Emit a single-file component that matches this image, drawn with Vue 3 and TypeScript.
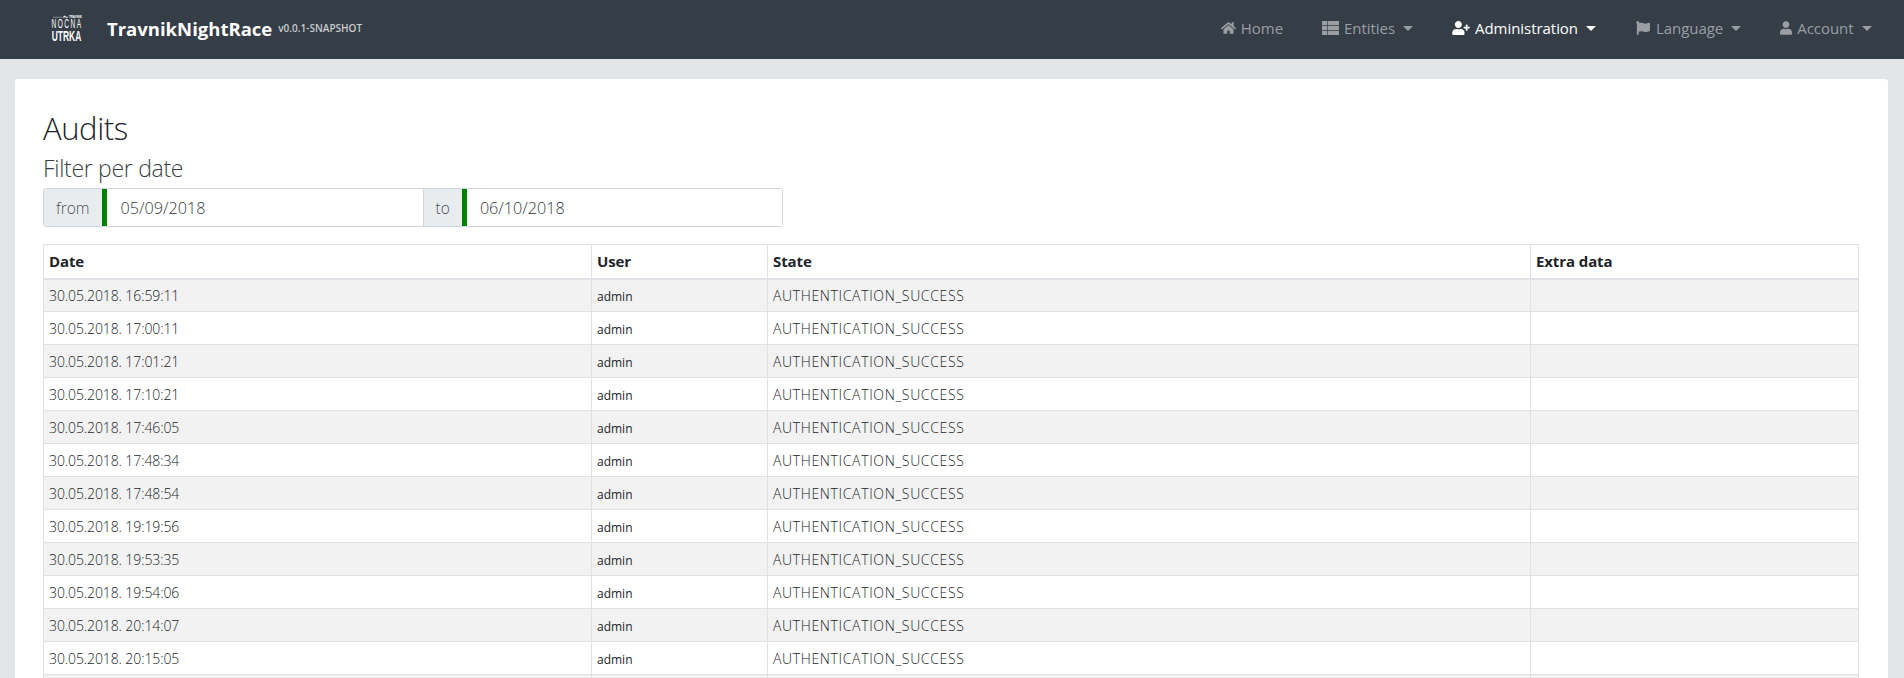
<script setup lang="ts">
interface NavItem { label: string; vb: string; d: string; w: number; caret: boolean; active?: boolean }
const navItems: NavItem[] = [
  { label: 'Home', vb: '0 0 576 512', w: 15, caret: false, d: 'M280.37 148.26L96 300.11V464a16 16 0 0 0 16 16l112.06-.29a16 16 0 0 0 15.92-16V368a16 16 0 0 1 16-16h64a16 16 0 0 1 16 16v95.64a16 16 0 0 0 16 16.05L464 480a16 16 0 0 0 16-16V300L295.67 148.26a12.19 12.19 0 0 0-15.3 0zM571.6 251.47L488 182.56V44.05a12 12 0 0 0-12-12h-56a12 12 0 0 0-12 12v72.61L318.47 43a48 48 0 0 0-61 0L4.34 251.47a12 12 0 0 0-1.6 16.9l25.5 31A12 12 0 0 0 45.15 301l235.22-193.74a12.19 12.19 0 0 1 15.3 0L530.9 301a12 12 0 0 0 16.9-1.6l25.5-31a12 12 0 0 0-1.7-16.93z' },
  { label: 'Entities', vb: '0 0 512 420', w: 17, caret: true, d: 'M0 0h152v124H0zM172 0h340v124H172zM0 148h152v124H0zM172 148h340v124H172zM0 296h152v124H0zM172 296h340v124H172z' },
  { label: 'Administration', vb: '0 0 640 512', w: 18, caret: true, active: true, d: 'M624 208h-64v-64c0-8.8-7.2-16-16-16h-32c-8.8 0-16 7.2-16 16v64h-64c-8.8 0-16 7.2-16 16v32c0 8.8 7.2 16 16 16h64v64c0 8.8 7.2 16 16 16h32c8.8 0 16-7.2 16-16v-64h64c8.8 0 16-7.2 16-16v-32c0-8.8-7.2-16-16-16zm-400 48c70.7 0 128-57.3 128-128S294.7 0 224 0 96 57.3 96 128s57.3 128 128 128zm89.6 32h-16.7c-22.2 10.2-46.9 16-72.9 16s-50.6-5.8-72.9-16h-16.7C60.2 288 0 348.2 0 422.4V464c0 26.5 21.5 48 48 48h352c26.5 0 48-21.5 48-48v-41.6c0-74.2-60.2-134.4-134.4-134.4z' },
  { label: 'Language', vb: '0 0 512 512', w: 16, caret: true, d: 'M349.565 98.783C295.978 98.783 251.721 64 184.348 64c-24.955 0-47.309 4.384-68.045 12.013a55.947 55.947 0 0 0 3.586-23.562C118.117 24.015 94.806 1.206 66.338.048 34.345-1.254 8 24.296 8 56c0 19.026 9.497 35.825 24 45.945V488c0 13.255 10.745 24 24 24h16c13.255 0 24-10.745 24-24v-94.4c28.311-12.064 63.582-22.122 114.435-22.122 53.588 0 97.844 34.783 165.217 34.783 48.169 0 86.667-16.294 122.505-40.858C506.84 359.452 512 349.571 512 339.045v-243.1c0-23.393-24.269-38.87-45.485-29.016-34.338 15.948-76.454 31.854-116.95 31.854z' },
  { label: 'Account', vb: '0 0 448 512', w: 12, caret: true, d: 'M224 256c70.7 0 128-57.3 128-128S294.7 0 224 0 96 57.3 96 128s57.3 128 128 128zm89.6 32h-16.7c-22.2 10.2-46.9 16-72.9 16s-50.6-5.8-72.9-16h-16.7C60.2 288 0 348.2 0 422.4V464c0 26.5 21.5 48 48 48h352c26.5 0 48-21.5 48-48v-41.6c0-74.2-60.2-134.4-134.4-134.4z' },
]
const times = ['16:59:11','17:00:11','17:01:21','17:10:21','17:46:05','17:48:34','17:48:54','19:19:56','19:53:35','19:54:06','20:14:07','20:15:05']
const rows = times.map(t => ({ date: `30.05.2018. ${t}`, user: 'admin', state: 'AUTHENTICATION_SUCCESS' }))
</script>

<template>
  <div class="page">
    <header class="navbar">
      <div class="logo">
        <svg class="logo-mark" viewBox="0 0 20 4" aria-hidden="true"><path d="M0 3h12M13 3l3-2 1 2z" stroke="#fff" stroke-width=".5" fill="#fff"/></svg>
        <span class="logo-top">TRAVNIK</span>
        <span class="logo-a">NOČNA</span>
        <span class="logo-b">UTRKA</span>
      </div>
      <span class="brand">TravnikNightRace</span>
      <span class="version">v0.0.1-SNAPSHOT</span>
      <nav class="nav">
        <a v-for="item in navItems" :key="item.label" class="nav-link" :class="{ active: item.active }">
          <svg class="nav-icon" :viewBox="item.vb" :width="item.w" height="14" fill="currentColor" aria-hidden="true"><path :d="item.d" /></svg>
          <span>{{ item.label }}</span>
          <i v-if="item.caret" class="caret"></i>
        </a>
      </nav>
    </header>
    <main class="content">
      <section class="card">
        <h2 class="title">Audits</h2>
        <h4 class="subtitle">Filter per date</h4>
        <div class="range">
          <span class="addon addon-from">from</span>
          <input class="date" readonly value="05/09/2018" />
          <span class="addon">to</span>
          <input class="date" readonly value="06/10/2018" />
        </div>
        <table class="audit">
          <colgroup>
            <col class="c-date" /><col class="c-user" /><col class="c-state" /><col class="c-extra" />
          </colgroup>
          <thead>
            <tr><th>Date</th><th>User</th><th>State</th><th>Extra data</th></tr>
          </thead>
          <tbody>
            <tr v-for="r in rows" :key="r.date">
              <td class="when">{{ r.date }}</td>
              <td><small>{{ r.user }}</small></td>
              <td class="state">{{ r.state }}</td>
              <td></td>
            </tr>
            <tr class="next"><td></td><td></td><td></td><td></td></tr>
          </tbody>
        </table>
      </section>
    </main>
  </div>
</template>

<style>
html, body { margin: 0; height: 100%; overflow: hidden; background: #e4e5e6; }
</style>

<style scoped>
.page { width: 1904px; height: 678px; overflow: hidden; font-family: "Open Sans", "Noto Sans", sans-serif; color: #212529; }
.navbar { height: 59px; background: #353d47; display: flex; align-items: center; box-sizing: border-box; padding: 0 0 3px 51px; }
.logo { width: 31px; height: 26px; margin-right: 25px; display: flex; flex-direction: column; align-items: center; color: #fff; font-family: "Liberation Sans", sans-serif; position: relative; }
.logo-mark { position: absolute; left: 1px; top: 0; width: 17px; height: 3px; }
.logo-top { position: absolute; right: 0; top: 0; font-size: 3px; line-height: 4px; font-weight: 700; }
.logo-a { margin-top: 3px; font-size: 13px; line-height: 12px; letter-spacing: 3px; transform: scaleX(.5); white-space: nowrap; }
.logo-b { font-size: 14px; line-height: 12px; font-weight: 700; transform: scaleX(.6); white-space: nowrap; }
.brand { color: #fff; font-weight: 700; font-size: 18.5px; }
.version { color: #c9cbce; font-weight: 600; font-size: 10px; margin: -1px 0 0 6px; }
.nav { margin-left: auto; display: flex; padding-right: 13px; }
.nav-link { display: flex; align-items: center; padding: 0 19.5px; font-size: 15px; letter-spacing: -.05px; color: #9a9ea3; }
.nav-link.active { color: #fff; }
.nav-icon { margin-right: 5px; }
.caret { margin-left: 8px; border-top: 5px solid currentColor; border-left: 5px solid transparent; border-right: 5px solid transparent; }
.content { padding: 20px 16px 0 15px; }
.card { background: #fff; border-radius: 3px; padding: 30px 30px 0 28px; height: 620px; box-sizing: border-box; }
.title { margin: 0; font-size: 31px; font-weight: 300; line-height: 38px; letter-spacing: -.4px; }
.subtitle { margin: 7px 0 0; font-size: 23px; font-weight: 300; line-height: 28px; letter-spacing: -.3px; color: #3a3f44; }
.range { display: flex; width: 740px; height: 39px; margin-top: 6px; border: 1px solid #ced4da; border-radius: 3px; box-sizing: border-box; }
.addon { display: flex; align-items: center; padding: 0 12px; background: #e9ecef; font-size: 15.5px; font-weight: 300; color: #495057; }
.addon-from { padding-right: 13px; }
.addon + .date + .addon { border-left: 1px solid #ced4da; }
.date { flex: 1; min-width: 0; border: 0; border-left: 5px solid #008000; padding: 0 13px; font: 300 16.2px "Open Sans", sans-serif; color: #343a40; outline: none; }
.audit { margin-top: 17px; width: 1815px; table-layout: fixed; border-collapse: collapse; font-size: 14px; }
.c-date { width: 548px; }
.c-user { width: 176px; }
.c-state { width: 763px; }
.c-extra { width: 328px; }
th, td { border: 1px solid #dee2e6; padding: 0 5px; text-align: left; height: 33px; box-sizing: border-box; }
th { border-bottom-width: 2px; font-weight: 700; font-size: 15px; letter-spacing: -.1px; height: 34px; }
td { font-weight: 300; }
.when { letter-spacing: -.1px; }
.state { letter-spacing: .65px; }
tbody tr:nth-child(odd) { background: #f2f2f2; }
small { font-size: 12px; font-weight: 400; }
</style>
